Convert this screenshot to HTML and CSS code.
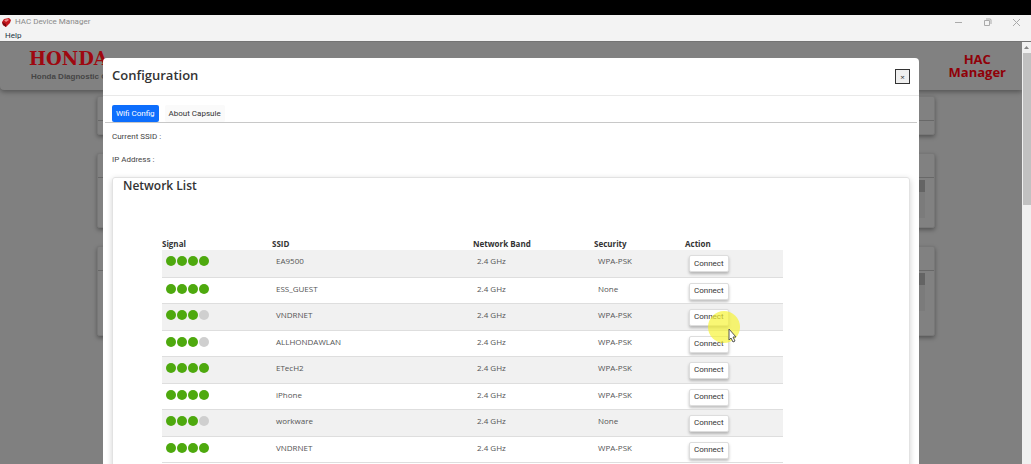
FILE: index.html
```html
<!DOCTYPE html>
<html lang="en">
<head>
<meta charset="utf-8">
<title>HAC Device Manager</title>
<link rel="stylesheet" href="styles.css">
</head>
<body>
<div class="letterbox"></div>
<header class="titlebar">
  <div class="app-name">
    <svg class="app-icon" width="11" height="11" viewBox="0 0 11 11" aria-hidden="true"><path d="M3 2 8 1l2 2-1 3-4 4-3-2-1-3z" fill="#c3161c"/><path d="M3 3 7 2l1 1-3 2z" fill="#ee8b8b"/><path d="M1 5 5 7v3L2 8z" fill="#7c0a10"/></svg>
    <span>HAC Device Manager</span>
  </div>
  <div class="window-controls">
    <button aria-label="Minimize"><svg width="9" height="9" viewBox="0 0 9 9"><path d="M1 4.500h7"/></svg></button>
    <button aria-label="Restore"><svg width="9" height="9" viewBox="0 0 9 9"><path d="M1.500 2.500h5v5h-5zM3 1h4q1 0 1 1v4"/></svg></button>
    <button aria-label="Close"><svg width="9" height="9" viewBox="0 0 9 9"><path d="m1 1 7 7M8 1 1 8"/></svg></button>
  </div>
</header>
<nav class="menubar"><button>Help</button></nav>
<div class="viewport">
  <div class="page">
    <div class="banner">
      <div class="brand">
        <div class="brand-name">HONDA</div>
        <div class="brand-sub">Honda Diagnostic Client</div>
      </div>
      <div class="product">HAC<br>Manager</div>
    </div>
    <div class="panels">
      <section class="panel panel-short"><div class="panel-head"></div></section>
      <section class="panel panel-medium"><div class="panel-head"></div><div class="mini-scroll"><i></i></div></section>
      <section class="panel panel-tall"><div class="panel-head"></div><div class="mini-scroll"><i></i></div></section>
    </div>
    <div class="modal" role="dialog" aria-labelledby="modal-title">
      <div class="modal-head">
        <h1 id="modal-title">Configuration</h1>
        <button class="close" aria-label="Close dialog">×</button>
      </div>
      <div class="tabs" role="tablist">
        <button class="tab active" role="tab" aria-selected="true">Wifi Config</button>
        <button class="tab" role="tab" aria-selected="false">About Capsule</button>
      </div>
      <div class="modal-body">
        <p>Current SSID :</p>
        <p>IP Address :</p>
        <section class="networks">
          <h2>Network List</h2>
          <table>
            <colgroup><col class="c-signal"><col class="c-ssid"><col class="c-band"><col class="c-security"><col class="c-action"></colgroup>
            <thead><tr><th>Signal</th><th>SSID</th><th>Network Band</th><th>Security</th><th>Action</th></tr></thead>
            <tbody>
              <tr><td><span class="signal"><i></i><i></i><i></i><i></i></span></td><td>EA9500</td><td>2.4 GHz</td><td>WPA-PSK</td><td><button>Connect</button></td></tr>
              <tr><td><span class="signal"><i></i><i></i><i></i><i></i></span></td><td>ESS_GUEST</td><td>2.4 GHz</td><td>None</td><td><button>Connect</button></td></tr>
              <tr><td><span class="signal"><i></i><i></i><i></i><i class="off"></i></span></td><td>VNDRNET</td><td>2.4 GHz</td><td>WPA-PSK</td><td><button>Connect</button></td></tr>
              <tr><td><span class="signal"><i></i><i></i><i></i><i class="off"></i></span></td><td>ALLHONDAWLAN</td><td>2.4 GHz</td><td>WPA-PSK</td><td><button>Connect</button></td></tr>
              <tr><td><span class="signal"><i></i><i></i><i></i><i></i></span></td><td>ETecH2</td><td>2.4 GHz</td><td>WPA-PSK</td><td><button>Connect</button></td></tr>
              <tr><td><span class="signal"><i></i><i></i><i></i><i></i></span></td><td>iPhone</td><td>2.4 GHz</td><td>WPA-PSK</td><td><button>Connect</button></td></tr>
              <tr><td><span class="signal"><i></i><i></i><i></i><i class="off"></i></span></td><td>workware</td><td>2.4 GHz</td><td>None</td><td><button>Connect</button></td></tr>
              <tr><td><span class="signal"><i></i><i></i><i></i><i></i></span></td><td>VNDRNET</td><td>2.4 GHz</td><td>WPA-PSK</td><td><button>Connect</button></td></tr>
            </tbody>
          </table>
        </section>
      </div>
    </div>
  </div>
  <div class="scrollbar"><svg width="9" height="11" viewBox="0 0 9 11" aria-hidden="true"><path d="m2 7 2.500-3L7 7z" fill="#858585"/></svg><div class="thumb"></div></div>
</div>
<svg class="pointer" width="34" height="34" viewBox="0 0 34 34" aria-hidden="true"><circle cx="16" cy="16" r="16" fill="#f6f332" fill-opacity=".68"/><path d="M21 18v11l2-2 2 4 2-1-2-4h3z" fill="#fff" stroke="#555"/></svg>
</body>
</html>
```
FILE: styles.css
```css
* { box-sizing: border-box; }
body {
  margin: 0;
  height: 100vh;
  overflow: hidden;
  display: flex;
  flex-direction: column;
  background: #808080;
  color: #333;
  font: 8px/12px "Open Sans", "Noto Sans", sans-serif;
}
button { font: inherit; color: inherit; border: 0; padding: 0; background: none; }
h1, h2, p { margin: 0; }

.letterbox { flex: none; height: 15px; background: #000; }
.titlebar {
  flex: none;
  height: 14px;
  display: flex;
  justify-content: space-between;
  align-items: center;
  background: #f3f3f3;
  color: #8a8a8a;
}
.app-name { display: flex; align-items: center; gap: 3px; padding-left: 1px; font-family: Roboto, sans-serif; }
.window-controls { display: flex; gap: 20px; padding-right: 10px; }
.window-controls button { height: 9px; width: 9px; display: flex; }
.window-controls path { fill: none; stroke: #aaa; }
.menubar {
  flex: none;
  height: 12px;
  padding-left: 5px;
  display: flex;
  align-items: flex-end;
  background: #f3f3f3;
  color: #234;
  font-family: Roboto, sans-serif;
  line-height: 10px;
}

.viewport { flex: 1; min-height: 0; display: flex; border-top: 1px solid #747474; }
.page { flex: 1; position: relative; overflow: hidden; background: #808080; }
.banner {
  height: 48px;
  display: flex;
  justify-content: space-between;
  padding: 8px 16px 0 29px;
  border-radius: 0 0 0 4px;
  background: #818181;
  box-shadow: 0 2px 5px rgba(0, 0, 0, .35);
}
.brand-name { font: bold 18px/18px "DejaVu Serif", serif; color: #9e0810; }
.brand-sub { margin: 3px 0 0 2px; font: bold 8px/12px "Liberation Sans", sans-serif; color: #454545; white-space: nowrap; }
.product { padding-top: 3px; font-size: 13px; line-height: 13px; font-weight: 700; text-align: center; color: #900008; }

.panels { display: grid; gap: 18px; padding: 6px 87px 0 97px; }
.panel {
  position: relative;
  border: 1px solid #777;
  border-radius: 2px;
  background: #818181;
  box-shadow: 0 2px 4px rgba(0, 0, 0, .35);
}
.panel-short { height: 39px; }
.panel-medium { height: 75px; }
.panel-tall { height: 90px; }
.panel-head { height: 24px; border-bottom: 1px solid #686868; }
.mini-scroll { width: 6px; height: 38px; margin: 2px 9px 0 auto; background: #7b7b7b; }
.mini-scroll i { display: block; height: 12px; background: #646464; }

/* Dialog sits over the dimmed page */
.modal {
  position: absolute;
  top: 16px;
  bottom: 0;
  left: 103px;
  right: 103px;
  border-radius: 4px 4px 0 0;
  background: #fff;
}
.modal-head {
  height: 38px;
  display: flex;
  align-items: center;
  justify-content: space-between;
  padding: 0 9px;
  border-bottom: 1px solid #e9e9e9;
}
h1 { font-size: 13px; line-height: 18px; font-weight: 600; }
.modal-head h1 { padding-bottom: 4px; }
.close { width: 15px; height: 15px; border: 1px solid #333; background: #efefef; line-height: 12px; }
.tabs {
  display: flex;
  gap: 6px;
  margin: 0 2px;
  padding: 9px 7px 0;
  border-bottom: 1px solid #c8c8c8;
  font-family: Roboto, sans-serif;
}
.tab { height: 17px; padding: 0 4px; border-radius: 2px; background: #fafafa; }
.tab.active { background: #0d6efd; color: #fff; }
.modal-body { padding: 8px 9px 0; }
.modal-body p { height: 23px; font-family: Roboto, sans-serif; color: #444; }
.networks {
  height: 320px;
  padding: 0 126px 0 49px;
  border: 1px solid #e2e2e2;
  border-radius: 3px;
  box-shadow: 0 2px 6px rgba(0, 0, 0, .18);
}
h2 { margin-left: -39px; font-size: 12px; line-height: 16px; font-weight: 600; }
table { width: 100%; margin-top: 44px; border-collapse: collapse; table-layout: fixed; }
.c-signal { width: 110px; }
.c-ssid { width: 201px; }
.c-band { width: 121px; }
.c-security { width: 91px; }
th { height: 12px; padding: 0; text-align: left; font-weight: 700; }
td { height: 26px; padding: 5px 4px 0; vertical-align: top; border-bottom: 1px solid #dedede; color: #555; }
tbody tr:nth-child(odd) td { height: 27px; background: #f1f1f1; }
.signal { display: flex; gap: 1px; padding-top: 1px; }
.signal i { width: 10px; height: 10px; border-radius: 50%; background: #4ea90e; }
.signal .off { background: #cfcfcf; }
td button {
  display: block;
  height: 17px;
  padding: 0 4px;
  border: 1px solid #ddd;
  border-radius: 2px;
  background: #fff;
  color: #333;
  font-family: Roboto, sans-serif;
  box-shadow: 0 2px 3px rgba(0, 0, 0, .25);
}

.scrollbar { flex: none; width: 9px; background: #f0f0f0; }
.scrollbar svg { display: block; }
.thumb { height: 152px; margin-left: 1px; background: #c1c1c1; }
.pointer { position: absolute; left: 708px; top: 311px; }
```
